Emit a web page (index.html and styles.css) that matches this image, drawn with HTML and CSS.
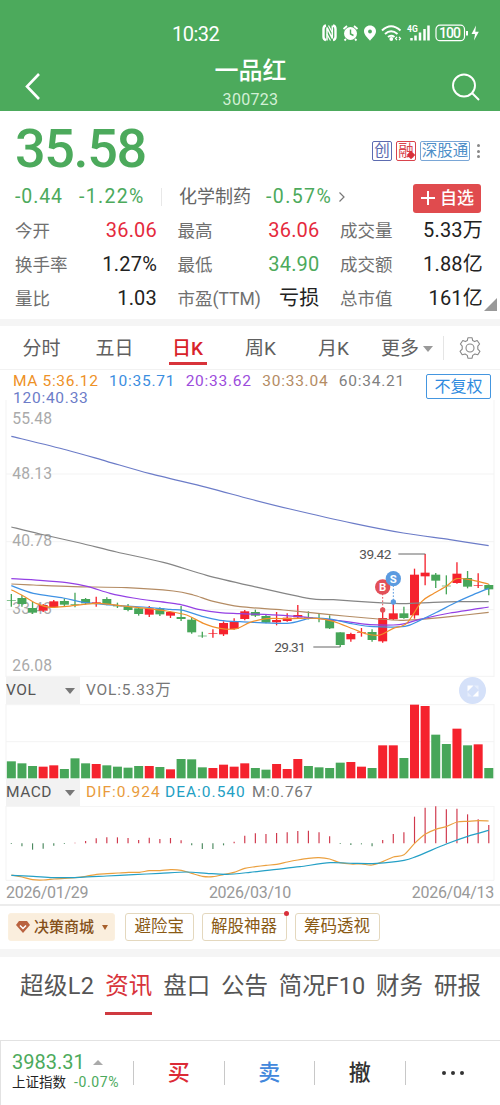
FILE: index.html
```html
<!DOCTYPE html>
<html lang="zh-CN">

<head>
    <meta charset="UTF-8">
    <meta name="viewport" content="width=device-width, initial-scale=1.0">
    <title>一品红 300723</title>
    <link rel="stylesheet" href="styles.css">
</head>

<body>
    <header class="header">
        <div class="statusbar">
            <span class="clock">10:32</span>
            <svg class="status-icons" width="160" height="20" viewBox="0 0 160 20" fill="none" stroke="#fff">
                <!-- nfc -->
                <path d="M4 2.5 Q1.5 3 1.500 6 V14 Q1.500 16.500 4 17M11 2.500 Q13.500 3 13.500 6 V14 Q13.500 16.500 11 17" stroke-width="2.400" />
                <path d="M5 17.500 V4.500 L10.300 15.500 V2.500" stroke-width="1.500" />
                <path d="M6.500 2.500 L10 9M5 11 L8.500 17.500" stroke-width="1.200" />
                <!-- alarm -->
                <circle cx="28.500" cy="10.500" r="6.500" fill="#fff" stroke="none" />
                <path d="M21.500 6 L25 3M32 3 L35.500 6M24 16 L22.500 17.500M33 16 L34.500 17.500" stroke-width="1.800" />
                <path d="M28.500 6.500 V11 L31.500 12.500" stroke="#4caa5c" stroke-width="1.400" />
                <!-- location -->
                <path d="M48 2.500 C51.500 2.500 54 5 54 8.300 C54 12 50.500 14.500 48 17.800 C45.500 14.500 42 12 42 8.300 C42 5 44.500 2.500 48 2.500Z" fill="#fff" stroke="none" />
                <circle cx="48" cy="8.500" r="1.900" fill="#4caa5c" stroke="none" />
                <!-- wifi -->
                <path d="M60 7.500 Q69 -1 78.500 7.500M63 11 Q69 5.500 75.500 11M66 14 Q69 11.500 72.500 14" stroke-width="2" />
                <circle cx="69.300" cy="16" r="1.900" fill="#fff" stroke="none" />
                <path d="M75 13.800 L73.500 15.500 L75 17.200M77 13.800 L78.500 15.500 L77 17.200" stroke-width="1.200" />
                <!-- signal -->
                <path d="M89.500 15 V17.500M93.500 12.500 V17.500M98 9.500 V17.500M102.500 6 V17.500M106.500 2.500 V17.500" stroke-width="2.500" />
                <text class="net" x="85" y="9">4G</text>
                <!-- battery -->
                <rect x="114" y="2.200" width="28.500" height="15.500" rx="4" stroke-width="1.200" />
                <text class="battery" x="117" y="15" textLength="22">100</text>
                <path d="M145 8 V12.500" stroke-width="2" />
                <path d="M154 2.500 L149.500 11 H153 L152 17.500 L156.800 8.800 H153.300Z" fill="#fff" stroke="none" />
            </svg>
        </div>
        <div class="titlebar">
            <svg class="back" width="20" height="28" viewBox="0 0 20 28" fill="none" stroke="#fff" stroke-width="2.600">
                <path d="M16 2 L4 14.500 L16 27" />
            </svg>
            <div class="title">
                <h1>一品红</h1>
                <p>300723</p>
            </div>
            <svg class="search" width="30" height="30" viewBox="0 0 30 30" fill="none" stroke="#fff" stroke-width="1.900">
                <circle cx="13" cy="13.500" r="11" />
                <path d="M21 21 L28 28" />
            </svg>
        </div>
    </header>

    <section class="quote">
        <div class="price-row">
            <span class="price">35.58</span>
            <div class="badges">
                <span class="badge indigo">创</span>
                <span class="badge red">融<i></i></span>
                <span class="badge blue">深股通</span>
                <span class="dots"><i></i><i></i><i></i></span>
            </div>
        </div>
        <div class="change-row">
            <span class="change">-0.44</span>
            <span class="percent">-1.22%</span>
            <span class="industry">化学制药</span>
            <span class="industry-percent">-0.57%</span>
            <svg width="8" height="12" viewBox="0 0 8 12" fill="none" stroke="#777" stroke-width="1.200">
                <path d="M1.500 1.500 L6 6 L1.500 10.500" />
            </svg>
            <button type="button" class="add"><svg width="16" height="16" viewBox="0 0 16 16" stroke="#fff" stroke-width="2"><path d="M8 1 V15M1 8 H15" /></svg>自选</button>
        </div>
        <dl class="stats">
            <div><dt>今开</dt><dd class="up">36.06</dd></div>
            <div><dt>最高</dt><dd class="up">36.06</dd></div>
            <div><dt>成交量</dt><dd>5.33万</dd></div>
            <div><dt>换手率</dt><dd>1.27%</dd></div>
            <div><dt>最低</dt><dd class="down">34.90</dd></div>
            <div><dt>成交额</dt><dd>1.88亿</dd></div>
            <div><dt>量比</dt><dd>1.03</dd></div>
            <div><dt>市盈(TTM)</dt><dd>亏损</dd></div>
            <div><dt>总市值</dt><dd>161亿</dd></div>
        </dl>
        <span class="corner"></span>
    </section>

    <nav class="periods">
        <a>分时</a>
        <a>五日</a>
        <a class="active">日K</a>
        <a>周K</a>
        <a>月K</a>
        <a class="more">更多<i class="caret"></i></a>
        <svg class="gear" width="24" height="24" viewBox="0 0 24 24" fill="none" stroke="#888" stroke-width="1.100" stroke-linejoin="round">
            <path d="M9.900 1.800 H14.100 L14.700 4.600 L16.600 5.600 L19.200 4.500 L21.600 8 L19.800 10.100 V13.200 L22 15.300 L19.800 18.800 L16.900 18 L14.700 19.400 L14.100 22.200 H9.900 L9.300 19.400 L7.100 18 L4.200 18.800 L2 15.300 L4.200 13.200 V10.100 L2.400 8 L4.800 4.500 L7.400 5.600 L9.300 4.600Z" />
            <circle cx="12" cy="12" r="4" />
        </svg>
    </nav>

    <section class="chart">
        <div class="ma-legend">
            <p>
                <span class="ma5">MA 5:36.12</span>
                <span class="ma10">10:35.71</span>
                <span class="ma20">20:33.62</span>
                <span class="ma30">30:33.04</span>
                <span class="ma60">60:34.21</span>
                <span class="ma120">120:40.33</span>
            </p>
            <button type="button" class="adjust">不复权</button>
        </div>
        <svg id="kline" width="500" height="277" viewBox="0 0 1500 831"></svg>

        <div class="indicator">
            <span class="select">VOL<i class="caret"></i></span>
            <span class="vol">VOL:5.33万</span>
            <span class="expand">
                <svg width="14" height="14" viewBox="0 0 14 14" fill="#fff"><path d="M1.500 1.500 H7.500 L1.500 7.500ZM12.500 12.500 H6.500 L12.500 6.500Z" /><path d="M8 1.500 H12.500 V6L10.500 4ZM1.500 8 V12.500 H6L4 10.500Z" opacity=".4" /></svg>
            </span>
        </div>
        <svg id="volume" width="500" height="75" viewBox="0 0 1500 225"></svg>

        <div class="indicator">
            <span class="select">MACD<i class="caret"></i></span>
            <span class="dif">DIF:0.924</span>
            <span class="dea">DEA:0.540</span>
            <span class="macd">M:0.767</span>
        </div>
        <svg id="macd" width="500" height="75" viewBox="0 0 1500 225"></svg>

        <div class="dates">
            <span>2026/01/29</span>
            <span>2026/03/10</span>
            <span>2026/04/13</span>
        </div>
    </section>

    <section class="tools">
        <span class="tool mall">
            <svg width="14" height="12" viewBox="0 0 14 12"><path d="M3 0 H11 L14 4 L7 12 L0 4Z" fill="#b9623f" /><path d="M4 4.500 L7 7.500 L10 4.500" fill="none" stroke="#fff" stroke-width="1.500" /></svg>
            决策商城
            <i class="caret"></i>
        </span>
        <span class="tool">避险宝</span>
        <span class="tool hot">解股神器</span>
        <span class="tool">筹码透视</span>
    </section>

    <nav class="tabs">
        <a class="level2">超级L2</a>
        <a class="active">资讯</a>
        <a>盘口</a>
        <a>公告</a>
        <a>简况F10</a>
        <a>财务</a>
        <a>研报</a>
    </nav>

    <footer class="bottombar">
        <div class="index">
            <p class="index-value">3983.31<i></i></p>
            <p class="index-name">上证指数<span>-0.07%</span></p>
        </div>
        <a class="buy">买</a>
        <a class="sell">卖</a>
        <a>撤</a>
        <a class="menu"><i></i><i></i><i></i></a>
    </footer>

    <script src="script.js"></script>
</body>

</html>
```
FILE: styles.css
```css
* {
    margin: 0;
    padding: 0;
    box-sizing: border-box;
}

body {
    width: 500px;
    background-color: #fff;
    color: #222;
    font-family: Roboto, "Noto Sans CJK SC", sans-serif;
    overflow-x: hidden;
}

svg {
    display: block;
    flex-shrink: 0;
}

button {
    font-family: inherit;
}

a,
span {
    white-space: nowrap;
}

.caret {
    border: 5px solid transparent;
    border-top: 6px solid #777;
    border-bottom: 0;
}

/* header */

.header {
    height: 111px;
    background-color: #4caa5c;
    color: #fff;
}

.statusbar {
    height: 54px;
    padding: 22px 18px 0 172px;
    display: flex;
    justify-content: space-between;
}

.clock {
    font-size: 20px;
    line-height: 24px;
    letter-spacing: -0.5px;
}

.status-icons {
    margin-top: 1px;
}

.status-icons text {
    fill: #fff;
    stroke: none;
}

.net {
    font-size: 8.5px;
    font-weight: 700;
}

.battery {
    font-size: 14px;
    font-weight: 500;
}

.titlebar {
    height: 57px;
    padding: 0 19px 0 23px;
    display: flex;
    justify-content: space-between;
}

.back {
    margin: 18px 7px 0 0;
}

.search {
    margin-top: 18px;
}

.title {
    padding-top: 1px;
    text-align: center;
}

.title h1 {
    font-size: 24px;
    font-weight: 500;
    line-height: 32px;
}

.title p {
    font-size: 16px;
    line-height: 25px;
    letter-spacing: 0.3px;
    color: #d3f0d6;
}

/* quote */

.quote {
    position: relative;
    height: 215px;
    padding: 9px 17px 0 15px;
    border-bottom: 7px solid #f5f5f5;
}

.price-row {
    height: 60px;
    display: flex;
    justify-content: space-between;
}

.price {
    font-size: 54px;
    font-weight: 500;
    line-height: 57px;
    letter-spacing: -1.4px;
    color: #4caa5c;
}

.badges {
    display: flex;
    gap: 4px;
    margin: 21px 0 0;
}

.badge {
    position: relative;
    width: 20px;
    height: 20px;
    border: 1px solid;
    border-radius: 2px;
    font-size: 15.5px;
    line-height: 18px;
    text-align: center;
}

.indigo {
    color: #5c6bb0;
}

.red {
    color: #d9434c;
}

.red i {
    position: absolute;
    right: 1px;
    bottom: 2px;
    width: 6px;
    height: 6px;
    background-color: #d9303a;
    transform: rotate(45deg);
}

.blue {
    width: 50px;
    color: #4f8fc8;
    border-color: #79a6d6;
}

.dots {
    width: 9px;
    height: 20px;
    display: flex;
    flex-direction: column;
    align-items: center;
    justify-content: space-evenly;
}

.dots i {
    width: 3px;
    height: 3px;
    border-radius: 50%;
    background-color: #888;
}

.change-row {
    height: 34px;
    display: flex;
    align-items: center;
    line-height: 30px;
    color: #4caa5c;
    font-size: 19.5px;
}

.change {
    width: 64px;
    letter-spacing: 0.9px;
}

.percent {
    width: 83px;
    border-right: 1px solid #e8e8e8;
    line-height: 18px;
    letter-spacing: 1.3px;
}

.industry {
    width: 104px;
    padding-left: 17px;
    font-size: 18px;
    color: #666;
}

.industry-percent {
    width: 72px;
    letter-spacing: 1.4px;
}

.add {
    width: 68px;
    height: 29px;
    margin: 2px 2px 0 auto;
    display: flex;
    align-items: center;
    justify-content: center;
    gap: 4px;
    border: none;
    border-radius: 3px;
    background-color: #e04b4e;
    color: #fff;
    font-size: 17px;
    font-weight: 500;
    line-height: 26px;
}

.stats {
    display: grid;
    grid-template-columns: 142px 142px 143px;
    column-gap: 20.5px;
    grid-auto-rows: 34px;
}

.stats div {
    display: flex;
    justify-content: space-between;
    line-height: 33px;
    white-space: nowrap;
}

.stats dt {
    font-size: 17.5px;
    line-height: 34px;
    color: #707070;
}

.stats dd {
    font-size: 20px;
    letter-spacing: 0.2px;
}

.stats .up {
    color: #e52a3d;
}

.stats .down {
    color: #4caa5c;
}

.corner {
    position: absolute;
    right: 3px;
    bottom: 8px;
    border-left: 13px solid transparent;
    border-bottom: 13px solid #999;
}

/* periods */

.periods {
    height: 44px;
    padding: 0 18px 0 5px;
    display: flex;
    border-bottom: 1px solid #f2f2f2;
}

.periods a {
    width: 73px;
    display: flex;
    justify-content: center;
    font-size: 19px;
    line-height: 45px;
    color: #606060;
}

.periods .active {
    position: relative;
    color: #d8232a;
    font-weight: 500;
}

.periods .active::after {
    content: "";
    position: absolute;
    bottom: 4px;
    width: 38px;
    height: 3px;
    background-color: #d8333a;
}

.periods .more {
    gap: 4px;
    width: 70px;
    margin-left: 2px;
}

.more .caret {
    margin-top: 20px;
    height: 6px;
    border-top-color: #999;
}

.gear {
    width: 39px;
    height: 24px;
    margin: 10px 0 0 auto;
    padding-left: 14px;
    border-left: 1px solid #e5e5e5;
}

/* chart */

.chart {
    height: 536px;
    border-bottom: 2px solid #ececec;
}

.ma-legend {
    height: 30px;
    padding: 3px 9px 0 13px;
    display: flex;
    justify-content: space-between;
}

.ma-legend p {
    width: 410px;
    height: 32px;
    display: flex;
    flex-wrap: wrap;
    column-gap: 10.5px;
    font-size: 15.5px;
    line-height: 16.5px;
    letter-spacing: 0.75px;
}

.ma5 {
    color: #ee9126;
    letter-spacing: 0.65px;
}

.ma10 {
    color: #3b8ee0;
}

.ma20 {
    color: #9c4cdc;
}

.ma30 {
    color: #b48c64;
}

.ma60 {
    color: #808080;
}

.ma120 {
    color: #6c7cc8;
}

.adjust {
    width: 65px;
    height: 25px;
    margin-top: 1px;
    border: 1.5px solid #4496e0;
    border-radius: 2px;
    background-color: #fff;
    color: #2f8be0;
    font-size: 16px;
    line-height: 21px;
}

.indicator {
    height: 27px;
    padding: 0 14px 0 6px;
    display: flex;
    font-size: 15.5px;
    line-height: 26px;
}

.indicator .select {
    width: 74px;
    padding-right: 5px;
    margin-right: 6px;
    display: flex;
    justify-content: space-between;
    background-color: #f2f2f2;
    color: #555;
    letter-spacing: 0.5px;
}

.select .caret {
    height: 6px;
    margin-top: 11px;
}

.vol {
    color: #777;
    letter-spacing: 0.8px;
}

.expand {
    width: 27px;
    height: 27px;
    margin-left: auto;
    display: flex;
    align-items: center;
    justify-content: center;
    border-radius: 50%;
    background-color: #d5e1f9;
}

.dif {
    width: 79px;
    color: #e99b3b;
    letter-spacing: 1px;
}

.dea {
    width: 87px;
    color: #23a0c4;
    letter-spacing: 1px;
}

.macd {
    color: #777;
    letter-spacing: 0.7px;
}

.dates {
    padding: 1px 6px 0 6px;
    display: flex;
    justify-content: space-between;
    font-size: 16px;
    line-height: 22px;
    letter-spacing: -0.3px;
    color: #999;
}

.grid {
    stroke: #f3f3f3;
    stroke-width: 3;
}

.axis {
    font-size: 47px;
    fill: #aaa;
}

.note {
    font-size: 41px;
    fill: #555;
}

.line {
    fill: none;
    stroke-width: 3.6;
}

.marker {
    font-size: 34px;
    font-weight: 700;
    fill: #fff;
    text-anchor: middle;
}

/* tools */

.tools {
    height: 51px;
    padding: 7px 8px 0;
    display: flex;
    gap: 8px;
    border-bottom: 8px solid #f5f5f5;
}

.tool {
    position: relative;
    height: 28px;
    padding: 0 8.5px;
    border: 1px solid #e4d8be;
    border-radius: 3px;
    font-size: 16.5px;
    line-height: 26px;
    color: #8a5a14;
}

.mall {
    width: 107px;
    margin-right: 2px;
    padding: 0 7px;
    display: flex;
    align-items: center;
    gap: 4px;
    border-color: #fbf0df;
    background-color: #faeedd;
    font-size: 15px;
    font-weight: 500;
    color: #84501a;
}

.mall .caret {
    margin-left: 4px;
    border-width: 5px 3.5px 0;
    border-top-color: #a8602c;
}

.hot::after {
    content: "";
    position: absolute;
    top: -3px;
    right: -3px;
    width: 5px;
    height: 5px;
    border-radius: 50%;
    background-color: #d9303a;
}

/* tabs */

.tabs {
    height: 83px;
    padding: 9px 19px 0 20px;
    display: flex;
    justify-content: space-between;
}

.tabs a {
    height: 49px;
    font-size: 23.5px;
    line-height: 40px;
    color: #555;
}

.tabs .level2 {
    letter-spacing: 0.4px;
}

.tabs .active {
    border-bottom: 3px solid #cf3a40;
    color: #d8333a;
}

/* bottom bar */

.bottombar {
    height: 66px;
    padding: 0 0 2px 11px;
    display: flex;
    align-items: center;
    border-top: 1px solid #e2e2e2;
    border-left: 1px solid #e2e2e2;
}

.bottombar a {
    width: 90.5px;
    height: 24px;
    display: flex;
    align-items: center;
    justify-content: center;
    border-left: 1px solid #c8c8c8;
    font-size: 22px;
    line-height: 24px;
    font-weight: 500;
    color: #333;
}

.index {
    width: 121px;
    padding-bottom: 3px;
}

.index-value {
    display: flex;
    align-items: center;
    gap: 8px;
    font-size: 20px;
    line-height: 22px;
    color: #4caa5c;
}

.index-value i {
    border: 5px solid transparent;
    border-bottom: 5px solid #aaa;
    border-top: 0;
}

.index-name {
    display: flex;
    gap: 8px;
    font-size: 13.5px;
    line-height: 18px;
}

.index-name span {
    font-size: 14px;
    letter-spacing: 0.6px;
    color: #4caa5c;
}

.bottombar .buy {
    color: #dc2a36;
}

.bottombar .sell {
    color: #4288dc;
}

.bottombar .menu {
    width: 95px;
    gap: 5px;
}

.menu i {
    width: 4px;
    height: 4px;
    border-radius: 50%;
    background-color: #333;
}
```
FILE: script.js
```js
const RED = '#f5222d';
const GREEN = '#47a659';
const START = 34;
const STEP = 31.83;

// color, high, body top, body bottom, low
const candles = [
    ['g', 582, 600, 602, 620], ['g', 585, 594, 612, 620], ['g', 605, 624, 638, 642], ['r', 612, 615, 632, 636],
    ['r', 600, 604, 622, 624], ['g', 595, 603, 614, 618], ['g', 578, 612, 614, 622], ['g', 594, 597, 610, 614],
    ['r', 590, 607, 609, 620], ['g', 592, 597, 612, 616], ['g', 608, 615, 619, 624], ['g', 612, 619, 630, 634],
    ['g', 622, 625, 642, 647], ['r', 618, 625, 644, 651], ['g', 622, 625, 643, 648], ['r', 634, 636, 647, 654],
    ['g', 618, 651, 657, 663], ['g', 652, 659, 697, 701], ['g', 695, 707, 709, 713], ['r', 688, 699, 701, 713],
    ['r', 664, 669, 703, 708], ['r', 655, 665, 687, 689], ['r', 630, 634, 657, 661], ['g', 629, 636, 647, 651],
    ['g', 645, 648, 668, 670], ['r', 636, 660, 667, 676], ['r', 640, 653, 663, 665], ['r', 615, 645, 652, 655],
    ['g', 634, 652, 654, 658], ['g', 642, 655, 657, 667], ['g', 646, 657, 685, 687], ['g', 697, 697, 735, 741],
    ['r', 698, 702, 718, 725], ['r', 684, 696, 698, 710], ['g', 688, 696, 720, 725], ['r', 630, 654, 724, 728],
    ['r', 612, 640, 658, 660], ['g', 620, 640, 654, 656], ['r', 506, 524, 646, 656], ['r', 462, 518, 529, 556],
    ['g', 519, 524, 542, 564], ['g', 526, 557, 559, 583], ['r', 487, 521, 549, 551], ['g', 513, 534, 560, 565],
    ['r', 520, 555, 557, 564], ['g', 553, 555, 568, 586]
];

const volumes = [51, 45, 37, 35, 39, 28, 60, 45, 43, 39, 35, 32, 37, 37, 34, 27, 58, 57, 33, 31, 41, 35, 45,
    31, 26, 43, 28, 58, 37, 33, 31, 47, 49, 35, 31, 99, 99, 61, 221, 217, 131, 103, 149, 99, 102, 31];

const macd = [-2, -9, -19, -16, -7, -2, 2, 7, 15, 18, 18, 16, 10, 17, 13, 16, 9, -6, -17, -17, -6, 5, 23,
    30, 28, 31, 33, 37, 38, 33, 21, -2, -5, -3, -9, 10, 28, 33, 80, 107, 111, 102, 104, 87, 72, 55];

const averages = [
    ['#6c7cc8', '34,109 200,150 320,184 450,221 620,262 750,297 870,327 1060,370 1210,399 1350,419 1466,437'],
    ['#858585', '34,381 120,402 240,429 350,456 490,487 620,526 750,557 930,596 1000,599 1120,607 1210,611 1300,607 1380,605 1466,605'],
    ['#b48c64', '34,552 100,555 220,560 380,563 520,573 580,585 640,604 720,620 850,630 990,644 1100,654 1200,661 1250,659 1350,650 1466,637'],
    ['#9440e4', '34,536 120,541 200,548 265,560 330,580 400,594 480,605 540,613 600,629 660,638 720,641 850,646 960,656 1040,665 1110,674 1180,675 1215,671 1260,658 1350,639 1466,621'],
    ['#3f92e4', '34,557 100,580 190,594 250,607 350,616 430,621 510,628 550,631 610,650 660,661 720,665 860,670 930,655 990,657 1060,672 1120,680 1215,679 1260,661 1310,637 1370,606 1420,584 1466,565'],
    ['#f0902c', '34,569 70,588 110,611 150,622 200,619 250,613 300,610 360,617 440,625 500,633 560,645 610,670 660,685 710,686 750,667 800,656 870,656 950,655 1000,664 1060,687 1100,702 1140,705 1180,685 1220,670 1265,605 1300,581 1340,558 1370,536 1420,541 1466,552']
];

const dif = '34,207 66,213 98,221 130,222 162,219 194,217 226,215 258,211 290,205 322,203 354,201 386,199 418,199 448,194 480,194 512,191 544,193 575,202 607,211 639,212 670,206 702,199 734,187 766,182 798,178 830,175 862,168 893,162 925,157 957,155 989,159 1020,170 1052,174 1084,174 1116,177 1148,167 1180,153 1212,146 1243,113 1275,85 1307,70 1339,62 1371,48 1403,46 1435,44 1466,45';
const dea = '34,208 100,211 160,215 240,214 320,210 400,206 480,202 560,198 620,202 680,205 750,199 830,190 900,182 990,170 1060,172 1130,172 1212,163 1250,151 1339,114 1403,91 1466,73';

function x(i) {
    return START + i * STEP;
}

function color(i) {
    return candles[i][0] === 'r' ? RED : GREEN;
}

// smooth curve through all the points
function curve(points, stroke) {
    const p = points.split(' ').map((s) => s.split(',').map(Number));
    let d = `M${p[0]}`;
    for (let i = 0; i < p.length - 1; i++) {
        const a = p[i - 1] || p[i];
        const b = p[i];
        const c = p[i + 1];
        const e = p[i + 2] || c;
        d += ` C${b[0] + (c[0] - a[0]) / 7},${b[1] + (c[1] - a[1]) / 7} ${c[0] - (e[0] - b[0]) / 7},${c[1] - (e[1] - b[1]) / 7} ${c}`;
    }
    return `<path class="line" d="${d}" stroke="${stroke}"/>`;
}

function grid(ys, bottom) {
    return ys.map((y) => `<path class="grid" d="M18 ${y} H1482"/>`).join('') +
        `<path class="grid" d="M18 0 V${bottom} M1482 0 V${bottom}"/>`;
}

function marker(cx, cy, dot, letter, fill) {
    return `<path d="M${cx} ${cy} V${dot}" stroke="${fill}" stroke-width="3" stroke-dasharray="5 5"/>
        <circle cx="${cx}" cy="${dot}" r="8" fill="${fill}"/>
        <circle cx="${cx}" cy="${cy}" r="23" fill="${fill}"/>
        <text class="marker" x="${cx}" y="${cy + 12}">${letter}</text>`;
}

function drawKline() {
    let out = grid([222, 425, 629, 829], 831);
    [['55.48', 71], ['48.13', 237], ['40.78', 439], ['33.43', 641], ['26.08', 812]].forEach(([t, y]) => {
        out += `<text class="axis" x="37" y="${y}" textLength="119">${t}</text>`;
    });
    candles.forEach(([, high, top, bottom, low], i) => {
        out += `<path d="M${x(i)} ${high} V${low}" stroke="${color(i)}" stroke-width="4"/>`;
        out += `<rect x="${x(i) - 13.5}" y="${top}" width="27" height="${bottom - top}" fill="${color(i)}"/>`;
    });
    averages.forEach(([stroke, points]) => {
        out += curve(points, stroke);
    });
    out += '<path d="M1195 462 H1276 M940 741 H1021" stroke="#666" stroke-width="3"/>';
    out += '<text class="note" x="1078" y="477" textLength="96">39.42</text>';
    out += '<text class="note" x="823" y="756" textLength="94">29.31</text>';
    out += marker(1148, 561, 630, 'B', '#e25058');
    out += marker(1180, 536, 606, 'S', '#5b9be0');
    document.getElementById('kline').innerHTML = out;
}

function drawVolume() {
    let out = grid([2, 113], 225);
    volumes.forEach((v, i) => {
        out += `<rect x="${x(i) - 13.5}" y="${223 - v}" width="27" height="${v}" fill="${color(i)}"/>`;
    });
    document.getElementById('volume').innerHTML = out;
}

function drawMacd() {
    let out = grid([1, 223], 223);
    macd.forEach((v, i) => {
        out += `<path d="M${x(i)} 112 V${112 - v}" stroke="${v > 0 ? '#d0384c' : '#4d8a60'}" stroke-width="3.500"/>`;
    });
    out += curve(dif, '#eba03f') + curve(dea, '#25a0c6');
    document.getElementById('macd').innerHTML = out;
}

drawKline();
drawVolume();
drawMacd();
```
